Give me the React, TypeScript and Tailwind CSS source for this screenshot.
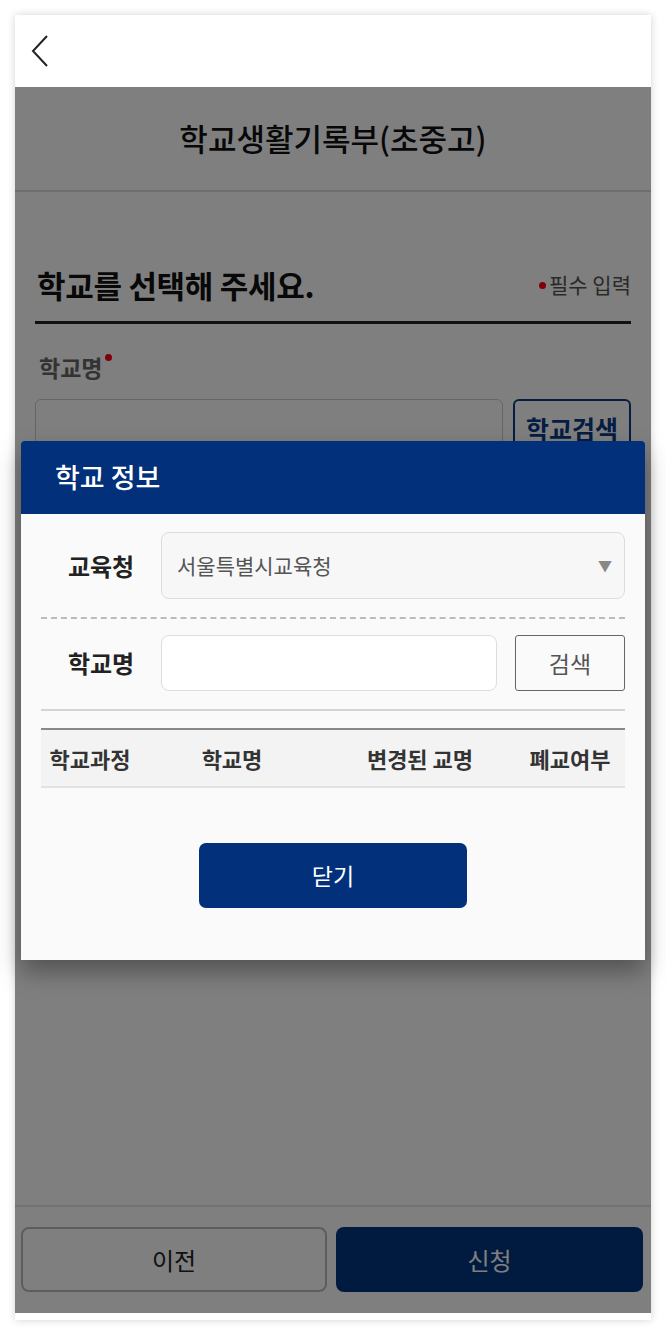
import React from 'react';

const App: React.FC = () => {
  return (
    <div className="min-h-[1335px] w-full bg-white pt-[15px] font-['Noto_Sans_CJK_KR',sans-serif]">
      <div className="mx-[15px] w-[636px] bg-white shadow-[0_0_8px_rgba(0,0,0,0.18)]">
        {/* Top header */}
        <div className="flex h-[72px] items-center pl-[16px]">
          <svg width="18" height="32" viewBox="0 0 18 32" fill="none">
            <path d="M16 1 L2 16 L16 31" stroke="#222" strokeWidth="2" strokeLinejoin="miter" />
          </svg>
        </div>

        {/* Main area with dim overlay */}
        <div className="relative flex h-[1226px] flex-col">
          <div className="flex h-[105px] items-center justify-center border-b-2 border-[#dedede]">
            <h1 className="text-[31px] font-medium text-[#111]">학교생활기록부(초중고)</h1>
          </div>

          <div className="flex-1 px-[20px]">
            <div className="mt-[73px] flex h-[40px] items-center justify-between">
              <h2 className="pl-[2px] text-[31px] font-bold tracking-[-0.3px] text-[#111]">학교를 선택해 주세요.</h2>
              <span className="flex items-center text-[21px] text-[#555]">
                <span className="mr-[3px] h-[7px] w-[7px] rounded-full bg-[#ff0010]" />
                필수 입력
              </span>
            </div>
            <div className="mt-[16px] border-t-[3px] border-[#222]" />

            <div className="mt-[28px] flex h-[30px] items-center pl-[4px] text-[23px] font-bold text-[#666]">
              학교명
              <span className="mb-[20px] ml-[3px] h-[7px] w-[7px] rounded-full bg-[#ff0010]" />
            </div>
            <div className="mt-[17px] flex gap-[10px]">
              <div className="h-[60px] flex-1 rounded-md border border-[#ccc] bg-white" />
              <button className="h-[60px] w-[118px] rounded-md border-2 border-[#0a3a85] text-[25px] font-bold text-[#0a3a85]">
                학교검색
              </button>
            </div>
          </div>

          {/* Bottom buttons */}
          <div className="flex h-[108px] gap-[9px] border-t-2 border-[#e5e5e5] pl-[6px] pt-[20px]">
            <button className="h-[65px] w-[306px] rounded-lg border-2 border-[#bbb] bg-white text-[24px] text-[#222]">
              이전
            </button>
            <button className="h-[65px] w-[307px] rounded-lg bg-[#03347e] text-[24px] text-white">
              신청
            </button>
          </div>

          <div className="absolute inset-0 bg-black/50" />

          {/* Modal */}
          <div className="absolute left-[6px] right-[6px] top-[354px] rounded-t-[3px] bg-[#fafafa] shadow-[0_12px_24px_rgba(0,0,0,0.35)]">
            <div className="flex h-[73px] items-center rounded-t-[3px] bg-[#03307a] px-[34px] text-[27px] font-medium text-white">
              학교 정보
            </div>
            <div className="px-[20px] pb-[52px] pt-[18px]">
              <div className="flex items-center">
                <span className="w-[120px] text-center text-[24px] font-bold text-[#222]">교육청</span>
                <div className="flex h-[67px] flex-1 items-center justify-between rounded-lg border border-[#ddd] bg-[#f7f7f7] pl-[15px] pr-[12px]">
                  <span className="text-[21px] text-[#555]">서울특별시교육청</span>
                  <span className="text-[14px] text-[#888]">▼</span>
                </div>
              </div>

              <div className="mt-[18px] border-t-2 border-dashed border-[#bbb]" />

              <div className="mt-[16px] flex items-center">
                <span className="w-[120px] text-center text-[24px] font-bold text-[#222]">학교명</span>
                <div className="h-[56px] flex-1 rounded-lg border border-[#ddd] bg-white" />
                <button className="ml-[18px] h-[56px] w-[110px] rounded-[3px] border border-[#666] text-[23px] text-[#555]">
                  검색
                </button>
              </div>

              <div className="mt-[18px] border-t-2 border-[#d4d4d4]" />

              <div className="mt-[17px] grid h-[60px] grid-cols-[98px_186px_190px_1fr] items-center border-b-2 border-t-2 border-b-[#e2e2e2] border-t-[#888] bg-[#f3f3f3] text-center text-[22px] font-bold text-[#333]">
                <span>학교과정</span>
                <span>학교명</span>
                <span>변경된 교명</span>
                <span>폐교여부</span>
              </div>

              <button className="mx-auto mt-[55px] flex h-[65px] w-[268px] items-center justify-center rounded-[7px] bg-[#03307a] text-[23px] text-white">
                닫기
              </button>
            </div>
          </div>
        </div>
        <div className="h-[7px]" />
      </div>
    </div>
  );
};

export default App;
